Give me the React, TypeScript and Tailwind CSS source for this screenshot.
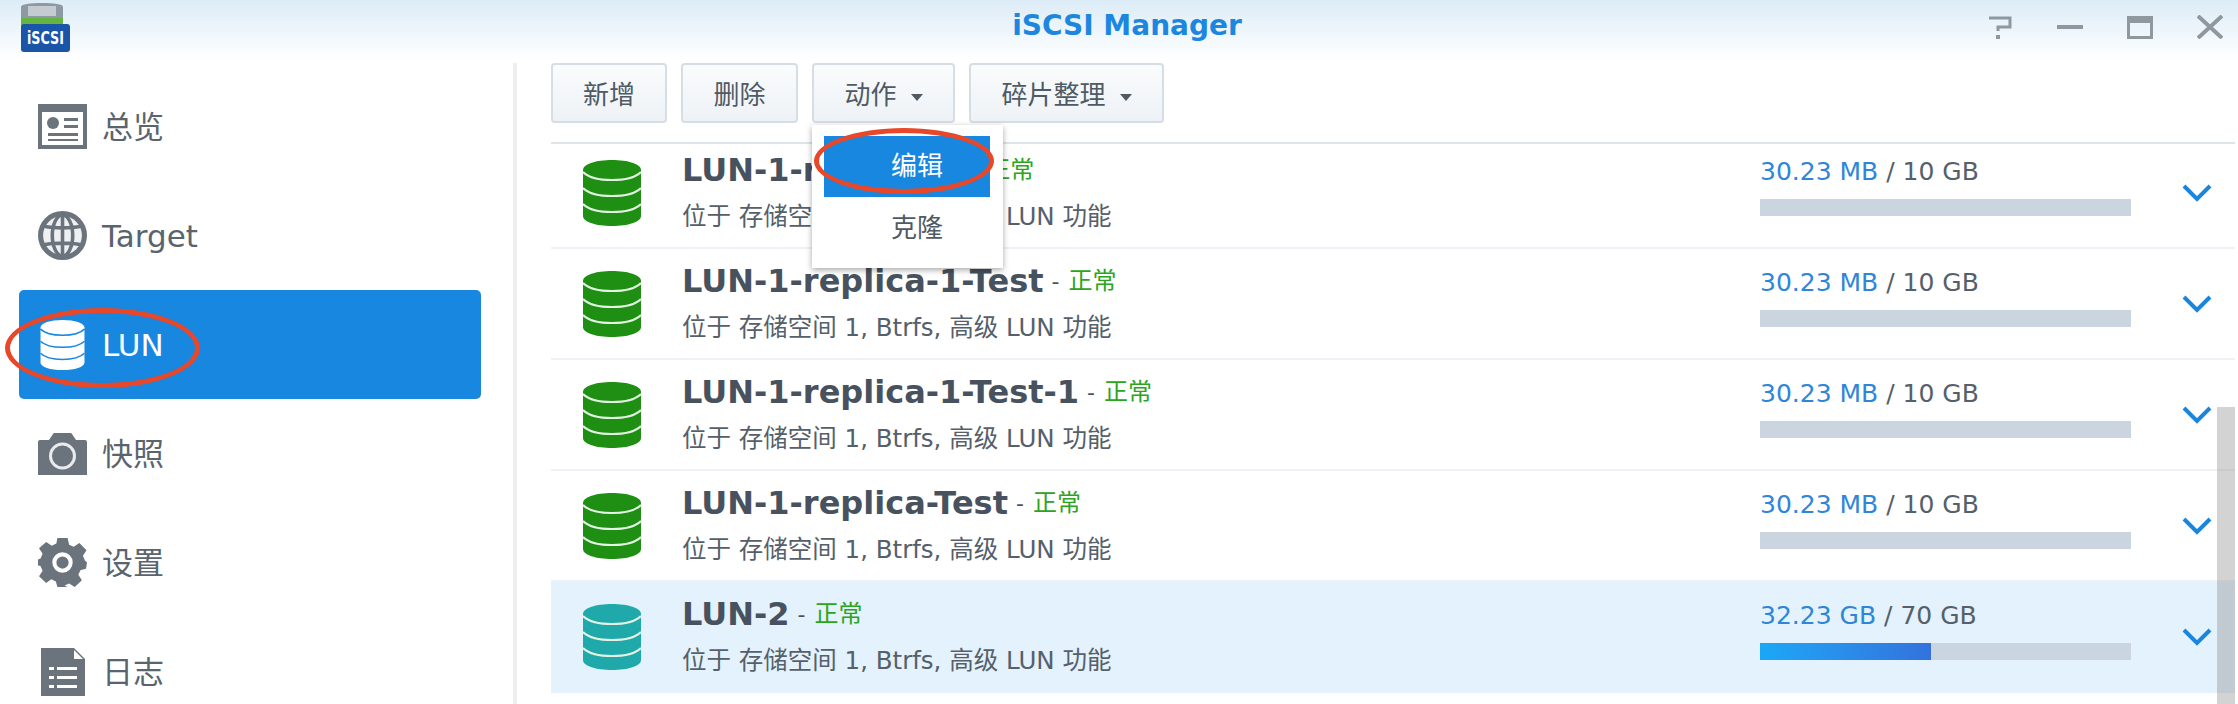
import React from 'react'

const sansFont = "font-['DejaVu_Sans','Noto_Sans_CJK_SC',sans-serif]"

const Database = ({ className, lines }: { className: string; lines: string }) => (
  <svg viewBox="0 0 58 66" className={className}>
    <path
      fill="currentColor"
      d="M0 10C0 4 13 0 29 0s29 4 29 10v46c0 6-13 10-29 10S0 62 0 56z"
    />
    <path
      fill="none"
      stroke={lines}
      strokeWidth="2"
      d="M0 12c6 6 18 8 29 8s23-2 29-8M0 28c6 6 18 8 29 8s23-2 29-8M0 44c6 6 18 8 29 8s23-2 29-8"
    />
  </svg>
)

const OverviewIcon = () => (
  <svg viewBox="0 0 49 45" className="w-[49px] h-[45px]">
    <path fill="#6b747d" d="M0 0h49v45H0z" />
    <path fill="#fff" d="M4 8h41v33H4z" />
    <circle cx="15" cy="19" r="6" fill="#6b747d" />
    <path fill="#6b747d" d="M26 14h14v3H26zM26 21h14v3H26zM10 29h30v3H10zM10 35h30v2H10z" />
  </svg>
)

const GlobeIcon = () => (
  <svg viewBox="0 0 48 48" className="w-[49px] h-[49px]">
    <circle cx="24" cy="24" r="24" fill="#6b747d" />
    <circle cx="24" cy="24" r="19" fill="#eef0f1" />
    <g fill="none" stroke="#6b747d" strokeWidth="3.500">
      <ellipse cx="24" cy="24" rx="10" ry="20" />
      <path d="M24 4v40M6 15c10 2 26 2 36 0M6 33c10-2 26-2 36 0" />
    </g>
  </svg>
)

const CameraIcon = () => (
  <svg viewBox="0 0 49 42" className="w-[49px] h-[42px]">
    <path
      fill="#6b747d"
      d="M0 9a2 2 0 0 1 2-2h9l4-6a2 2 0 0 1 2-1h15a2 2 0 0 1 2 1l4 6h9a2 2 0 0 1 2 2v33H0z"
    />
    <circle cx="24.5" cy="23" r="12" fill="none" stroke="#e9ebed" strokeWidth="3" />
  </svg>
)

const GearIcon = () => (
  <svg viewBox="0 0 48 48" className="w-[49px] h-[49px]">
    <path
      fill="#6b747d"
      d="M19 0h10l1.500 6.500 4.500 2 5.500-3.500 7 7-3.500 5.500 2 4.500L48 24l-1 6-5.500 1.500-2 4.500 3.500 5.500-7 6.500-5.500-3.500-4.500 2L29 48H19l-1.500-5.500-4.500-2L8 44l-7-6.500L4.500 32l-2-4.500L0 27v-6l2.500-1 2-4.500L1 10l7-6 5.500 3.500 4.500-2z"
    />
    <circle cx="24" cy="24" r="8" fill="#6b747d" stroke="#fff" strokeWidth="4" />
  </svg>
)

const LogIcon = () => (
  <svg viewBox="0 0 44 48" className="w-[44px] h-[48px]">
    <path fill="#6b747d" d="M0 0h33l11 11v37H0z" />
    <path fill="#fff" d="M33 2l9 9h-9z" />
    <path
      fill="#fff"
      d="M8 19h5v3H8zM16 19h20v3H16zM8 28h5v3H8zM16 28h20v3H16zM8 37h5v3H8zM16 37h20v3H16z"
    />
  </svg>
)

const navItems = [
  { label: '总览', icon: <OverviewIcon /> },
  { label: 'Target', icon: <GlobeIcon /> },
  { label: 'LUN', icon: <Database className="w-[45px] h-[50px] text-white" lines="#1787e0" />, active: true },
  { label: '快照', icon: <CameraIcon /> },
  { label: '设置', icon: <GearIcon /> },
  { label: '日志', icon: <LogIcon /> },
]

const luns = [
  { name: 'LUN-1-replica-1', used: '30.23 MB', total: '10 GB' },
  { name: 'LUN-1-replica-1-Test', used: '30.23 MB', total: '10 GB' },
  { name: 'LUN-1-replica-1-Test-1', used: '30.23 MB', total: '10 GB' },
  { name: 'LUN-1-replica-Test', used: '30.23 MB', total: '10 GB' },
  { name: 'LUN-2', used: '32.23 GB', total: '70 GB', selected: true },
]

const ToolButton = ({ label, width, caret }: { label: string; width: string; caret?: boolean }) => (
  <button
    className={`${width} h-[60px] flex items-center justify-center gap-[14px] pt-[5px] rounded-[4px] border-2 border-[#d5dde5] bg-gradient-to-b from-[#fafcfd] to-[#eef2f6] text-[26px] text-[#4f5a65]`}
  >
    {label}
    {caret && <span className="mt-1 w-0 h-0 border-x-[6px] border-x-transparent border-t-[7px] border-t-[#4f5a65]" />}
  </button>
)

const LunRow = ({ lun, first }: { lun: (typeof luns)[number]; first?: boolean }) => (
  <div
    className={`flex h-[111px] shrink-0 ${first ? 'mt-[-6px]' : ''} ${lun.selected ? 'bg-[#e3f2fc]' : 'border-b-2 border-[#eef2f6]'}`}
  >
    <Database
      className={`w-[58px] h-[66px] mt-[22px] ml-[32px] shrink-0 ${lun.selected ? 'text-[#1fa9ab]' : 'text-[#1f8f14]'}`}
      lines="#e4f4e4"
    />
    <div className="ml-[41px] flex-1 pt-[9px]">
      <div className="flex items-center h-[46px] whitespace-nowrap">
        <span className="text-[32px] font-bold text-[#47525e]">{lun.name}</span>
        <span className="ml-2 text-[22px] text-[#47525e]">-</span>
        <span className="ml-[9px] text-[24px] text-[#2ba520]">正常</span>
      </div>
      <div className="mt-[4px] text-[24.5px] leading-[40px] text-[#55606b] whitespace-nowrap">
        位于 存储空间 1, Btrfs, 高级 LUN 功能
      </div>
    </div>
    <div className="w-[371px] pt-[16px] shrink-0">
      <div className="h-[36px] text-[25px] leading-[36px] whitespace-nowrap text-[#55606b]">
        <span className="text-[#2f86d8]">{lun.used}</span> / {lun.total}
      </div>
      <div className="mt-[9px] h-[17px] bg-[#cbd5e0]">
        {lun.selected && <div className="h-full w-[171px] bg-gradient-to-r from-[#1aa7f7] to-[#3272dc]" />}
      </div>
    </div>
    <svg viewBox="0 0 30 18" className="w-[30px] h-[18px] mt-[46px] ml-[51px] mr-[23px] shrink-0">
      <path fill="none" stroke="#1a85dc" strokeWidth="4" d="M2 2l13 13L28 2" />
    </svg>
  </div>
)

const App = () => {
  return (
    <div className={`w-[2238px] h-[704px] overflow-hidden bg-white flex flex-col relative ${sansFont}`}>
      <header className="h-[60px] shrink-0 relative flex items-center justify-center bg-gradient-to-b from-[#dcecf6] to-white">
        <svg viewBox="0 0 50 50" className="absolute left-[20px] top-[2px] w-[50px] h-[50px]">
          <path fill="#8e9aa3" d="M1 5c0-3 9-4 21-4s21 1 21 4v16H1z" />
          <path fill="#c4ccd1" d="M8 4h28v10H8z" />
          <path fill="#63b53f" d="M1 16h42v8H1z" />
          <rect x="1" y="22" width="49" height="28" rx="3" fill="#1a55a8" />
          <text x="25.500" y="42" textAnchor="middle" fontSize="17" fontWeight="700" fill="#fff" textLength="37" lengthAdjust="spacingAndGlyphs">
            iSCSI
          </text>
        </svg>
        <h1 className="text-[28px] font-bold text-[#1d87e0] -mt-[9px] pl-[16px]">iSCSI Manager</h1>
        <div className="absolute right-[15px] top-[15px] flex items-center gap-[44px]">
          <svg viewBox="0 0 24 24" className="w-[24px] h-[24px]">
            <path fill="none" stroke="#8f979f" strokeWidth="3" d="M0 3h21v9H9v4" />
            <path fill="#8f979f" d="M7 20h4v4H7z" />
          </svg>
          <span className="w-[26px] h-[4px] bg-[#8f979f]" />
          <span className="w-[26px] h-[23px] border-[3px] border-t-[7px] border-[#8f979f]" />
          <svg viewBox="0 0 26 24" className="w-[26px] h-[24px]">
            <path fill="none" stroke="#8f979f" strokeWidth="4" d="M1 1l24 22M25 1L1 23" />
          </svg>
        </div>
      </header>

      <div className="flex flex-1 min-h-0">
        <aside className="w-[517px] shrink-0 pl-[19px] pr-[32px] pt-[9px] border-r-4 border-[#eceeef] mt-[3px]">
          {navItems.map((item) => (
            <div
              key={item.label}
              className={`h-[109px] flex items-center gap-[15px] rounded-[5px] pl-[19px] text-[31px] ${
                item.active ? 'bg-[#1787e0] text-white' : 'text-[#5a646e]'
              }`}
            >
              <div className="w-[49px] flex justify-center">{item.icon}</div>
              <span className="pt-[2px]">{item.label}</span>
            </div>
          ))}
        </aside>

        <main className="flex-1 min-w-0 pl-[34px] pr-[3px] flex flex-col">
          <div className="h-[84px] shrink-0 flex gap-[14px] pt-[3px] border-b-2 border-[#dfe4ea]">
            <ToolButton label="新增" width="w-[116px]" />
            <ToolButton label="删除" width="w-[117px]" />
            <ToolButton label="动作" width="w-[143px]" caret />
            <ToolButton label="碎片整理" width="w-[195px]" caret />
          </div>
          <div className="flex-1 min-h-0 overflow-hidden flex flex-col">
            {luns.map((lun, i) => (
              <LunRow key={lun.name} lun={lun} first={i === 0} />
            ))}
          </div>
        </main>
      </div>

      {/* scrollbar */}
      <div className="absolute left-[2217px] top-[407px] bottom-0 w-[18px] bg-[#808080]/35" />

      {/* open action menu */}
      <div className="absolute left-[812px] top-[125px] w-[191px] h-[143px] bg-white pt-[11px] pl-[12px] shadow-[0_2px_6px_rgba(0,0,0,0.35)]">
        <div className="w-[166px] h-[61px] bg-[#1787e0] text-white text-[26px] flex items-center justify-center pl-[20px]">
          编辑
        </div>
        <div className="w-[166px] h-[61px] text-[#4f5a65] text-[26px] flex items-center justify-center pl-[20px] pt-[2px]">
          克隆
        </div>
      </div>

      {/* red annotations */}
      <div className="absolute left-[814px] top-[128px] w-[180px] h-[66px] rounded-[50%] border-[5px] border-[#e8472a]" />
      <div className="absolute left-[5px] top-[308px] w-[195px] h-[80px] rounded-[50%] border-[5px] border-[#e8472a]" />
    </div>
  )
}

export default App
